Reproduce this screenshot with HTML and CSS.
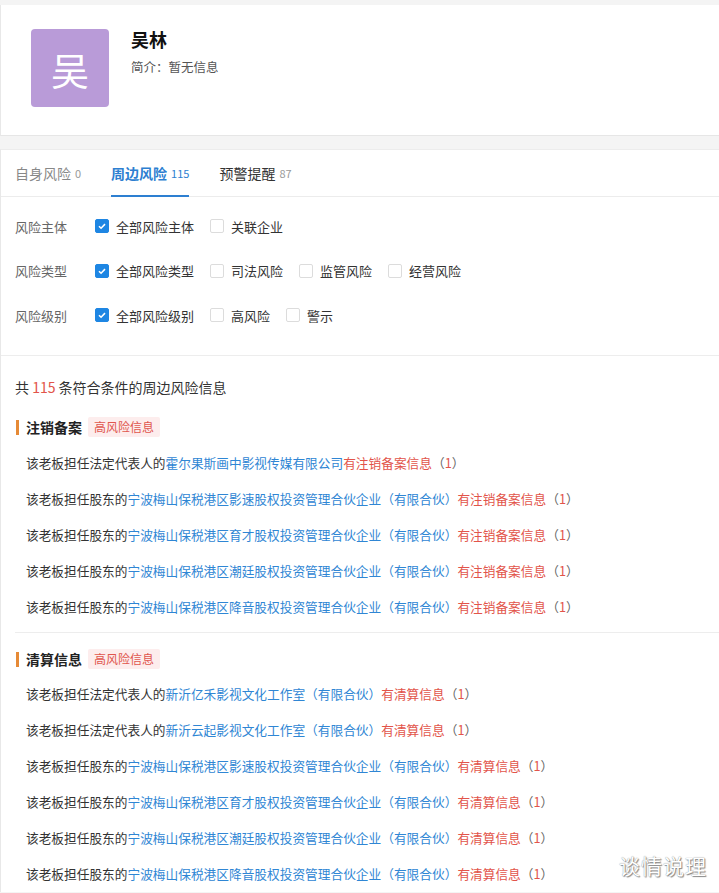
FILE: index.html
```html
<!DOCTYPE html>
<html lang="zh-CN">
<head>
    <meta charset="UTF-8">
    <meta name="viewport" content="width=device-width, initial-scale=1.0">
    <title>吴林 - 周边风险</title>
    <link rel="stylesheet" href="styles.css">
</head>
<body>
    <div class="profile-card">
        <div class="avatar">吴</div>
        <div class="profile-info">
            <div class="name">吴林</div>
            <div class="intro">简介：暂无信息</div>
        </div>
    </div>

    <div class="risk-card">
        <div class="tabs">
            <div class="tab muted">自身风险 <span class="num">0</span></div>
            <div class="tab active">周边风险 <span class="num">115</span></div>
            <div class="tab">预警提醒 <span class="num">87</span></div>
        </div>

        <div class="filters">
            <div class="filter-row">
                <div class="filter-label">风险主体</div>
                <label class="opt"><span class="box checked"><svg viewBox="0 0 14 14"><path d="M3.5 7.2l2.4 2.4 4.6-4.8" /></svg></span>全部风险主体</label>
                <label class="opt"><span class="box"></span>关联企业</label>
            </div>
            <div class="filter-row">
                <div class="filter-label">风险类型</div>
                <label class="opt"><span class="box checked"><svg viewBox="0 0 14 14"><path d="M3.5 7.2l2.4 2.4 4.6-4.8" /></svg></span>全部风险类型</label>
                <label class="opt"><span class="box"></span>司法风险</label>
                <label class="opt"><span class="box"></span>监管风险</label>
                <label class="opt"><span class="box"></span>经营风险</label>
            </div>
            <div class="filter-row">
                <div class="filter-label">风险级别</div>
                <label class="opt"><span class="box checked"><svg viewBox="0 0 14 14"><path d="M3.5 7.2l2.4 2.4 4.6-4.8" /></svg></span>全部风险级别</label>
                <label class="opt"><span class="box"></span>高风险</label>
                <label class="opt"><span class="box"></span>警示</label>
            </div>
        </div>

        <div class="results">
            <div class="summary">共 <span class="red">115</span> 条符合条件的周边风险信息</div>

            <div class="section first">
                <div class="section-title">注销备案 <span class="tag">高风险信息</span></div>
                <div class="item">该老板担任法定代表人的<a class="link">霍尔果斯画中影视传媒有限公司</a><span class="red">有注销备案信息</span><span class="cnt">（<span class="red">1</span>）</span></div>
                <div class="item">该老板担任股东的<a class="link">宁波梅山保税港区影速股权投资管理合伙企业（有限合伙）</a><span class="red">有注销备案信息</span><span class="cnt">（<span class="red">1</span>）</span></div>
                <div class="item">该老板担任股东的<a class="link">宁波梅山保税港区育才股权投资管理合伙企业（有限合伙）</a><span class="red">有注销备案信息</span><span class="cnt">（<span class="red">1</span>）</span></div>
                <div class="item">该老板担任股东的<a class="link">宁波梅山保税港区潮廷股权投资管理合伙企业（有限合伙）</a><span class="red">有注销备案信息</span><span class="cnt">（<span class="red">1</span>）</span></div>
                <div class="item">该老板担任股东的<a class="link">宁波梅山保税港区降音股权投资管理合伙企业（有限合伙）</a><span class="red">有注销备案信息</span><span class="cnt">（<span class="red">1</span>）</span></div>
            </div>

            <div class="section">
                <div class="section-title">清算信息 <span class="tag">高风险信息</span></div>
                <div class="item">该老板担任法定代表人的<a class="link">新沂亿禾影视文化工作室（有限合伙）</a><span class="red">有清算信息</span><span class="cnt">（<span class="red">1</span>）</span></div>
                <div class="item">该老板担任法定代表人的<a class="link">新沂云起影视文化工作室（有限合伙）</a><span class="red">有清算信息</span><span class="cnt">（<span class="red">1</span>）</span></div>
                <div class="item">该老板担任股东的<a class="link">宁波梅山保税港区影速股权投资管理合伙企业（有限合伙）</a><span class="red">有清算信息</span><span class="cnt">（<span class="red">1</span>）</span></div>
                <div class="item">该老板担任股东的<a class="link">宁波梅山保税港区育才股权投资管理合伙企业（有限合伙）</a><span class="red">有清算信息</span><span class="cnt">（<span class="red">1</span>）</span></div>
                <div class="item">该老板担任股东的<a class="link">宁波梅山保税港区潮廷股权投资管理合伙企业（有限合伙）</a><span class="red">有清算信息</span><span class="cnt">（<span class="red">1</span>）</span></div>
                <div class="item">该老板担任股东的<a class="link">宁波梅山保税港区降音股权投资管理合伙企业（有限合伙）</a><span class="red">有清算信息</span><span class="cnt">（<span class="red">1</span>）</span></div>
            </div>
        </div>
    </div>

    <div class="watermark">谈情说理</div>
</body>
</html>
```

FILE: styles.css
```css
body { margin: 0; padding-top: 5px; background: #f4f4f4; font-family: "Noto Sans CJK SC", "Liberation Sans", sans-serif; color: #333; font-size: 13px; }

.profile-card { display: flex; align-items: flex-start; height: 131px; box-sizing: border-box; padding: 24px 0 0 30px; background: #fff; border-left: 1px solid #e8e8e8; border-bottom: 1px solid #e6e6e6; }
.avatar { width: 78px; height: 78px; border-radius: 4px; background: #b99bd8; color: #fff; font-size: 38px; display: flex; align-items: center; justify-content: center; }
.profile-info { margin-left: 22px; margin-top: -2px; }
.name { font-size: 18px; font-weight: bold; color: #111; line-height: 24px; }
.intro { margin-top: 7px; font-size: 12.5px; color: #555; line-height: 18px; }

.risk-card { margin-top: 13px; background: #fff; border-left: 1px solid #e8e8e8; border-top: 1px solid #ececec; }

.tabs { display: flex; gap: 30px; padding: 0 14px; height: 46px; border-bottom: 1px solid #ececec; }
.tab { display: flex; align-items: center; font-size: 14px; color: #333; border-bottom: 2px solid transparent; margin-bottom: -1px; padding-top: 1px; box-sizing: border-box; }
.tab .num { font-size: 11px; color: #999; margin-left: 4px; }
.tab.muted { color: #888; }
.tab.active { color: #2d7fd1; font-weight: bold; border-bottom-color: #2d7fd1; }
.tab.active .num { color: #2d7fd1; font-weight: normal; }

.filters { padding: 7px 0 17px 14px; border-bottom: 1px solid #ededed; }
.filter-row { display: flex; align-items: center; height: 44.5px; }
.filter-label { width: 80px; color: #666; }
.opt { display: flex; align-items: center; margin-right: 16px; color: #333; }
.box { width: 14px; height: 14px; box-sizing: border-box; border: 1px solid #dcdcdc; border-radius: 2px; margin-right: 7px; display: flex; }
.box.checked { background: #1e86e3; border-color: #1e86e3; }
.box svg { width: 12px; height: 12px; fill: none; stroke: #fff; stroke-width: 1.8; }

.results { padding: 21px 0 0 14px; }
.summary { font-size: 14px; line-height: 20px; color: #333; }
.red { color: #e2544a; }
.section { padding-right: 14px; }
.section.first { margin-top: 18px; }
.section + .section { border-top: 1px solid #ededed; }
.section-title { display: flex; align-items: center; height: 24px; font-size: 14px; font-weight: bold; color: #222; padding-left: 11px; margin-bottom: 6px; position: relative; }
.section-title::before { content: ""; position: absolute; left: 1px; top: 5px; width: 3px; height: 15px; background: #e68a36; }
.section + .section .section-title { margin-top: 14px; margin-bottom: 5px; }
.tag { font-size: 12px; font-weight: normal; color: #e0564d; background: #fdeded; padding: 0 6px; line-height: 20px; margin-left: 6px; border-radius: 2px; }
.item { font-size: 12.7px; line-height: 36px; padding-left: 11px; white-space: nowrap; }
.section .item:last-child { margin-bottom: 7px; }
.link { color: #2f86d4; text-decoration: none; }
.cnt { color: #666; }

.watermark { position: absolute; left: 619px; top: 850px; font-size: 21px; color: #fff; text-shadow: 0 0 1px #777, 1px 1px 1px #888; letter-spacing: 1px; }
```
